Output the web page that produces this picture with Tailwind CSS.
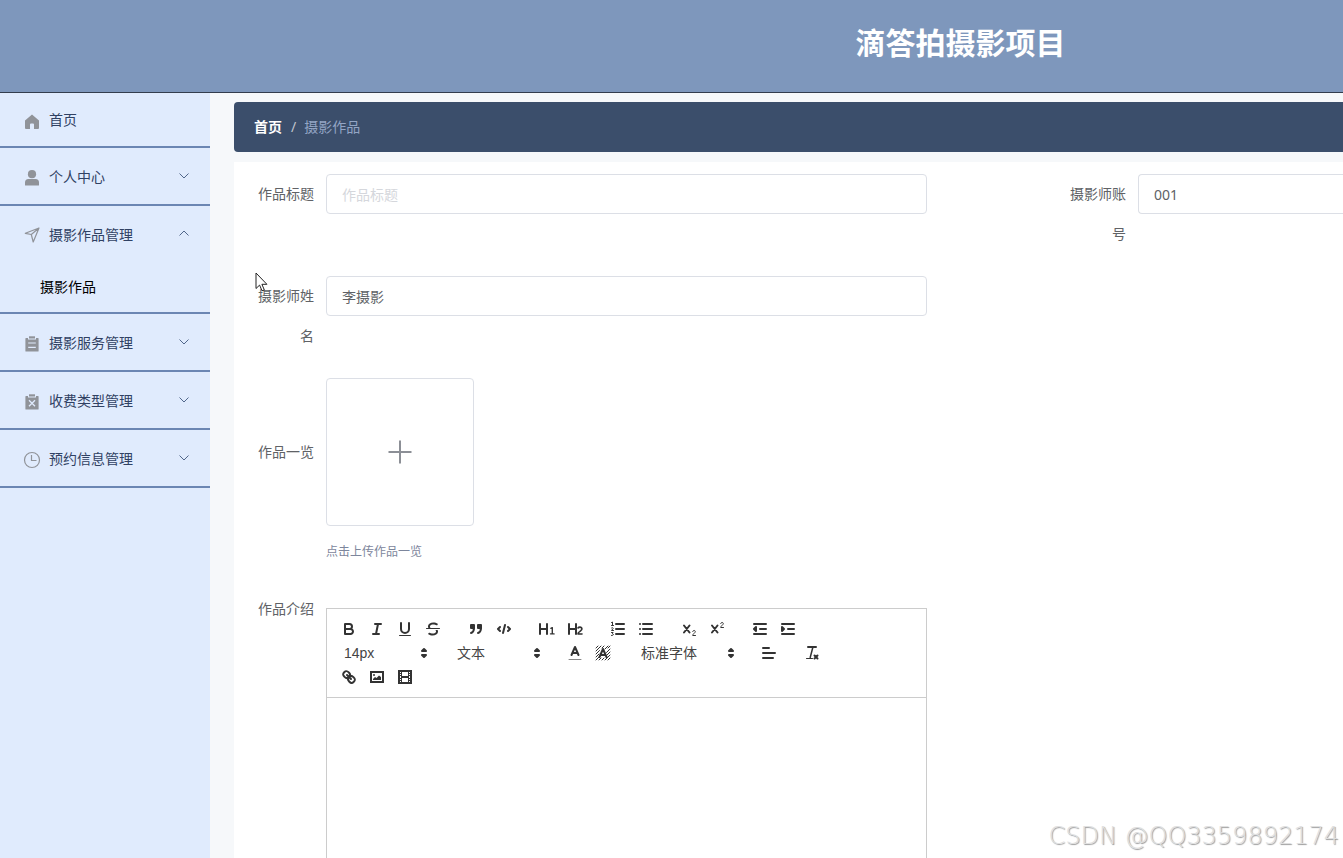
<!DOCTYPE html>
<html lang="zh-CN">
<head>
<meta charset="utf-8">
<meta name="viewport" content="width=device-width, initial-scale=1">
<title>滴答拍摄影项目</title>
<script src="https://cdn.jsdelivr.net/npm/@tailwindcss/browser@4"></script>
</head>
<body class="relative flex h-screen flex-col overflow-hidden bg-[#f6f8fa] font-['Noto_Sans','Noto_Sans_CJK_SC',sans-serif] text-sm text-[#606266]">

<header class="h-[93px] shrink-0 border-b border-[#333d4d] bg-[#7e97bc] pl-[578px]">
  <h1 class="pt-[13px] text-center text-[30px] leading-[60px] font-bold whitespace-nowrap text-white">滴答拍摄影项目</h1>
</header>

<div class="flex min-h-0 flex-1">
  <nav aria-label="主菜单" class="w-[210px] shrink-0 bg-[#e0ebfd] text-[#304163]">
    <a href="#" class="flex h-[55px] items-center gap-2 border-b-2 border-[#6b86b3] pl-[23px]">
      <svg class="mt-1 size-[18px] fill-[#909399]" viewBox="0 0 18 18"><path d="M9 1.500 2 7.400V15a1 1 0 0 0 1 1h4v-4.500a1 1 0 0 1 1-1h2a1 1 0 0 1 1 1V16h4a1 1 0 0 0 1-1V7.400z"/></svg>
      <span>首页</span>
    </a>
    <button class="flex h-[58px] w-full items-center gap-2 border-b-2 border-[#6b86b3] pt-0.5 pr-5 pl-[23px] text-left">
      <svg class="mt-0.5 size-[18px] fill-[#909399]" viewBox="0 0 18 18"><circle cx="9" cy="5.200" r="4.100"/><path d="M2 16v-2.500a3.500 3.500 0 0 1 3.500-3.500h7a3.500 3.500 0 0 1 3.500 3.500V16a.6.6 0 0 1-.6.6H2.600A.6.6 0 0 1 2 16z"/></svg>
      <span class="flex-1">个人中心</span>
      <svg class="mb-0.5 size-3 fill-none stroke-[#51678b]" viewBox="0 0 12 12"><path d="m1.500 3.500 4.500 4.500 4.500-4.500"/></svg>
    </button>
    <div class="border-b-2 border-[#6b86b3]">
      <button class="flex h-14 w-full items-center gap-2 pt-0.5 pr-5 pl-[23px] text-left">
        <svg class="size-[18px] fill-none stroke-[#909399] stroke-[1.200]" viewBox="0 0 18 18"><path d="M16 2 2.300 7.300l6 1.200 1.900 7.500zM16 2 8.300 8.500" stroke-linejoin="round"/></svg>
        <span class="flex-1">摄影作品管理</span>
        <svg class="mb-0.5 size-3 fill-none stroke-[#51678b]" viewBox="0 0 12 12"><path d="m1.500 7.500 4.500-4.500 4.500 4.500"/></svg>
      </button>
      <a href="#" class="block h-[50px] pl-10 leading-[50px] text-black">摄影作品</a>
    </div>
    <button class="flex h-[58px] w-full items-center gap-2 border-b-2 border-[#6b86b3] pt-0.5 pr-5 pl-[23px] text-left">
      <svg class="mt-0.5 size-[18px] fill-[#909399]" viewBox="0 0 18 18"><path fill-rule="evenodd" d="M3 3h2v1.500h8V3h2a.6.6 0 0 1 .6.6v12.300a.6.6 0 0 1-.6.6H3a.6.6 0 0 1-.6-.6V3.600A.6.6 0 0 1 3 3zM5.200 7.500v1.100h7.600V7.500zm0 4.300v1.100h7.600v-1.100z"/><path d="M6 1.300h6v2.200H6z"/></svg>
      <span class="flex-1">摄影服务管理</span>
      <svg class="mb-0.5 size-3 fill-none stroke-[#51678b]" viewBox="0 0 12 12"><path d="m1.500 3.500 4.500 4.500 4.500-4.500"/></svg>
    </button>
    <button class="flex h-[58px] w-full items-center gap-2 border-b-2 border-[#6b86b3] pt-0.5 pr-5 pl-[23px] text-left">
      <svg class="mt-0.5 size-[18px] fill-[#909399]" viewBox="0 0 18 18"><path d="M3 3h2v1.500h8V3h2a.6.6 0 0 1 .6.6v12.300a.6.6 0 0 1-.6.6H3a.6.6 0 0 1-.6-.6V3.600A.6.6 0 0 1 3 3z"/><path d="M6 1.300h6v2.200H6z"/><path class="stroke-[#e0ebfd]" stroke-width="1.300" d="m6 7.200 6 6m0-6-6 6"/></svg>
      <span class="flex-1">收费类型管理</span>
      <svg class="mb-0.5 size-3 fill-none stroke-[#51678b]" viewBox="0 0 12 12"><path d="m1.500 3.500 4.500 4.500 4.500-4.500"/></svg>
    </button>
    <button class="flex h-[58px] w-full items-center gap-2 border-b-2 border-[#6b86b3] pt-0.5 pr-5 pl-[23px] text-left">
      <svg class="mt-0.5 size-[18px] fill-none stroke-[#909399] stroke-[1.200]" viewBox="0 0 18 18"><circle cx="9" cy="9" r="7.500"/><path d="M8.500 4v5.500h5"/></svg>
      <span class="flex-1">预约信息管理</span>
      <svg class="mb-0.5 size-3 fill-none stroke-[#51678b]" viewBox="0 0 12 12"><path d="m1.500 3.500 4.500 4.500 4.500-4.500"/></svg>
    </button>
  </nav>

  <main class="flex min-w-0 flex-1 flex-col pt-[9px] pl-6">
    <nav aria-label="面包屑" class="flex h-[50px] shrink-0 items-center gap-2 rounded-l bg-[#3b4e6b] pl-5">
      <a href="#" class="font-bold text-white">首页</a>
      <span class="pl-px text-[#c0c4cc]">/</span>
      <span class="text-[#93a5c5]">摄影作品</span>
    </nav>

    <form class="mt-2.5 min-h-0 flex-1 overflow-hidden bg-white pt-3 pl-3">
      <div class="grid grid-cols-[681px_1fr] gap-x-[131px]">
        <div class="flex h-[102px]">
          <label for="title" class="w-20 shrink-0 pr-3 text-right leading-10">作品标题</label>
          <input id="title" placeholder="作品标题" class="h-10 min-w-0 flex-1 rounded border border-[#dcdfe6] px-[15px] placeholder:text-[#d5d7dc]">
        </div>
        <div class="flex h-[102px]">
          <label for="account" class="w-20 shrink-0 pr-3 text-right leading-10">摄影师账号</label>
          <input id="account" value="001" class="h-10 min-w-0 flex-1 rounded-l border border-r-0 border-[#dcdfe6] px-[15px]">
        </div>
        <div class="flex h-[102px]">
          <label for="name" class="w-20 shrink-0 pr-3 text-right leading-10">摄影师姓名</label>
          <input id="name" value="李摄影" class="h-10 min-w-0 flex-1 rounded border border-[#dcdfe6] px-[15px]">
        </div>
      </div>

      <div class="flex">
        <span class="w-20 shrink-0 pr-3 text-right leading-[148px]">作品一览</span>
        <div>
          <button type="button" aria-label="上传作品一览" class="flex size-[148px] items-center justify-center rounded border border-[#dcdfe6]">
            <svg class="size-6 fill-none stroke-[#8c8f96] stroke-2" viewBox="0 0 24 24"><path d="M12 .5v23M.5 12h23"/></svg>
          </button>
          <p class="mt-4 text-xs leading-5 text-[#7d869c]">点击上传作品一览</p>
        </div>
      </div>

      <div class="mt-[27px] flex">
        <span class="w-20 shrink-0 pr-3 text-right leading-10">作品介绍</span>
        <div class="mt-[19px] w-[601px] border border-[#ccc] text-[#444]">
          <div role="toolbar" aria-label="编辑工具" class="flex flex-wrap gap-x-[15px] border-b border-[#ccc] p-2 font-['Liberation_Sans','Noto_Sans_CJK_SC',sans-serif] [&_button]:h-6 [&_button]:w-7 [&_button]:px-[5px] [&_button]:py-[3px] [&_svg]:size-[18px] [&_svg]:fill-none [&_svg]:stroke-[#333] [&_svg]:stroke-2 [&_svg]:[stroke-linecap:round] [&_svg]:[stroke-linejoin:round]">
            <div class="flex">
              <button type="button" aria-label="粗体"><svg viewBox="0 0 18 18"><path d="M5 4h4.500A2.500 2.500 0 0 1 12 6.500 2.500 2.500 0 0 1 9.500 9H5V4zM5 9h5.500a2.500 2.500 0 0 1 2.500 2.500 2.500 2.500 0 0 1-2.500 2.500H5V9z"/></svg></button>
              <button type="button" aria-label="斜体"><svg viewBox="0 0 18 18"><path d="M7 4h6M5 14h6M8 14l2-10"/></svg></button>
              <button type="button" aria-label="下划线"><svg viewBox="0 0 18 18"><path d="M5 3v6a4.012 4.012 0 0 0 4 4 4.012 4.012 0 0 0 4-4V3"/><rect x="3" y="15" width="12" height="1" rx=".5" fill="#333" stroke="none"/></svg></button>
              <button type="button" aria-label="删除线"><svg viewBox="0 0 18 18"><path class="stroke-1" d="M2.500 8.500h13"/><path fill="#333" stroke="none" d="M6.500 8c-.500-.700-.600-1.300-.500-1.800.200-1.200 1.500-1.800 3.200-1.800 1.300 0 2.600.4 3.200.8a1 1 0 0 0 1-1.700C12.600 3 11 2.500 9.300 2.500 6.600 2.500 4.300 3.700 4 6c-.1.700 0 1.400.4 2zM11.500 10c.500.700.600 1.300.5 1.800-.2 1.200-1.500 1.800-3.200 1.800-1.300 0-2.600-.4-3.200-.8a1 1 0 0 0-1 1.700c.8.5 2.400 1 4.100 1 2.700 0 5-1.200 5.300-3.500.1-.7 0-1.400-.4-2z"/></svg></button>
            </div>
            <div class="flex">
              <button type="button" aria-label="引用"><svg viewBox="0 0 18 18"><g fill="#333"><path d="M4 5h3v3H4zM11 5h3v3h-3z"/><path fill="none" d="M7 8c0 4.031-3 5-3 5M14 8c0 4.031-3 5-3 5"/></g></svg></button>
              <button type="button" aria-label="代码"><svg viewBox="0 0 18 18"><path d="M5 7 3 9l2 2M13 7l2 2-2 2M10 5l-2 8"/></svg></button>
            </div>
            <div class="flex">
              <button type="button" aria-label="一级标题"><svg viewBox="0 0 18 18"><path fill="#333" stroke="none" d="M10 4v10a1 1 0 0 1-2 0v-4H3v4a1 1 0 0 1-2 0V4a1 1 0 0 1 2 0v4h5V4a1 1 0 0 1 2 0zm6.068 9.210H14.980V7.596a.543.543 0 0 0-.605-.605.910.910 0 0 0-.429.100l-1.430.700a.650.650 0 0 0-.200.900c.200.400.600.400.900.200l.400-.200v4.520h-1.046a.7.700 0 0 0-.1 1.400c.030.010.060.010.100.010h3.500a.7.700 0 0 0 0-1.410z"/></svg></button>
              <button type="button" aria-label="二级标题"><svg viewBox="0 0 18 18"><path fill="#333" stroke="none" d="M16.740 13.814v.281A.634.634 0 0 1 16.190 14.634H11.867a.6.600 0 0 1-.6-.6v-.3c0-2.200 3.700-3.100 3.700-4.700a1 1 0 0 0-1.100-1.100 1.400 1.400 0 0 0-1.100.500c-.250.300-.500.430-.9.230l-.4-.24c-.300-.170-.350-.5-.17-.800a3 3 0 0 1 2.700-1.270c1.500 0 2.700 1 2.700 2.500 0 2.200-3.100 3.400-3.500 4.350h2.970c.4 0 .573.21.573.61zM10 3a1 1 0 0 0-1 1v4H4V4a1 1 0 0 0-2 0v10a1 1 0 0 0 2 0v-4h5v4a1 1 0 0 0 2 0V4a1 1 0 0 0-1-1z"/></svg></button>
            </div>
            <div class="flex">
              <button type="button" aria-label="有序列表"><svg viewBox="0 0 18 18"><path d="M7 4h8M7 9h8M7 14h8"/><path class="stroke-1" d="M2.500 2.500 3.500 2v3.500M2.500 5.500h2M2.500 8c.700-.800 2-.300 1.600.600L2.500 10.500h2M2.500 12.500h1.600l-.700 1.200c1.600.300 1.300 2-.900 1.800"/></svg></button>
              <button type="button" aria-label="无序列表"><svg viewBox="0 0 18 18"><path d="M6 4h9M6 9h9M6 14h9M3 4h.010M3 9h.010M3 14h.010"/></svg></button>
            </div>
            <div class="flex">
              <button type="button" aria-label="下标"><svg viewBox="0 0 18 18"><path d="m4 5.500 5.500 7M9.500 5.500l-5.500 7"/><path class="stroke-1" d="M12.700 11.500c.300-1.500 2.600-1.400 2.600.1 0 1.200-2.600 2.300-2.600 3.900h2.800"/></svg></button>
              <button type="button" aria-label="上标"><svg viewBox="0 0 18 18"><path d="m4 5.500 5.500 7M9.500 5.500l-5.500 7"/><path class="stroke-1" d="M12.700 3.500c.300-1.500 2.600-1.400 2.600.1 0 1.200-2.600 2.300-2.600 3.900h2.800"/></svg></button>
            </div>
            <div class="flex">
              <button type="button" aria-label="减少缩进"><svg viewBox="0 0 18 18"><path d="M3 14h12M3 4h12M9 9h6M5 7v4L3 9z"/></svg></button>
              <button type="button" aria-label="增加缩进"><svg viewBox="0 0 18 18"><path d="M3 14h12M3 4h12M9 9h6M3 7v4l2-2z"/></svg></button>
            </div>
            <div class="basis-full"></div>
            <button type="button" class="flex! w-[98px]! items-center justify-between pr-0! pl-[9px]!">14px<svg viewBox="0 0 18 18"><path fill="#333" d="m7 11 2 2 2-2zM7 7l2-2 2 2z"/></svg></button>
            <button type="button" class="flex! w-[98px]! items-center justify-between pr-0! pl-[9px]!">文本<svg viewBox="0 0 18 18"><path fill="#333" d="m7 11 2 2 2-2zM7 7l2-2 2 2z"/></svg></button>
            <div class="flex">
              <button type="button" aria-label="文字颜色"><svg viewBox="0 0 18 18"><path class="stroke-[#888] stroke-1" d="M3 15.500h12"/><path d="M5.500 11 9 3l3.500 8M11.630 9H6.380"/></svg></button>
              <button type="button" aria-label="背景颜色"><svg viewBox="0 0 18 18"><path class="stroke-1" d="M2 4l2-2M2 7l5-5M2 10l3.500-3.500M2 13l3-3M2 16l4-4M8 4l2-2M5 16l2-2M8 16l2-2M11 16l5-5M14 16l2-2M12.500 8.500 16 5M11 5l3-3M13 11l3-3M14 4l2-2"/><path d="m5.500 13 3.500-8 3.500 8M11.630 11H6.380"/></svg></button>
            </div>
            <button type="button" class="flex! w-[108px]! items-center justify-between pr-0! pl-[9px]!">标准字体<svg viewBox="0 0 18 18"><path fill="#333" d="m7 11 2 2 2-2zM7 7l2-2 2 2z"/></svg></button>
            <button type="button" aria-label="对齐"><svg viewBox="0 0 18 18"><path d="M3 9h12M3 14h10M3 4h6"/></svg></button>
            <button type="button" aria-label="清除格式"><svg viewBox="0 0 18 18"><path d="M5 3h8M11.500 11.500l3 3M14.500 11.500l-3 3"/><path class="stroke-[1.500]" d="M9.800 3.500 7.200 13.500"/><path class="stroke-1" d="M3.500 14.500h6"/></svg></button>
            <div class="basis-full"></div>
            <div class="flex">
              <button type="button" aria-label="链接"><svg viewBox="0 0 18 18"><path d="m7 7 4 4M8.900 4.577a3.476 3.476 0 0 1 .360 4.679A3.476 3.476 0 0 1 4.577 8.900C3.185 7.500 2.035 6.400 4.217 4.217S7.500 3.185 8.900 4.577zM13.423 9.100a3.476 3.476 0 0 0-4.679-.360 3.476 3.476 0 0 0 .360 4.679c1.392 1.392 2.500 2.542 4.679.360s1.032-3.287-.360-4.679z"/></svg></button>
              <button type="button" aria-label="图片"><svg viewBox="0 0 18 18"><path class="[stroke-linejoin:miter]" d="M3 4h12v10H3z"/><circle cx="6" cy="7" r="1" fill="#333" stroke="none"/><path fill="#333" stroke="none" d="M5 12v-1l2-2 1.500 1L11 7.500l2 1.500v3z"/></svg></button>
              <button type="button" aria-label="视频"><svg viewBox="0 0 18 18"><path class="[stroke-linejoin:miter]" d="M3 3h12v12H3z"/><path fill="#333" stroke="none" d="M5 3h1v12H5zM12 3h1v12h-1zM5 8h8v2H5zM3 5h3v1H3zM3 7h3v1H3zM3 10h3v1H3zM3 12h3v1H3zM12 5h3v1h-3zM12 7h3v1h-3zM12 10h3v1h-3zM12 12h3v1h-3z"/></svg></button>
            </div>
          </div>
          <div role="textbox" aria-label="作品介绍" contenteditable="true" class="min-h-96"></div>
        </div>
      </div>
    </form>
  </main>
</div>

<svg class="absolute top-[272px] left-[255px] h-5 w-3.5" viewBox="0 0 14 20" aria-hidden="true"><path d="M1 1v15.500l3.600-3.400 2.400 5.700 2.300-1-2.400-5.500h5z" fill="#fff" stroke="#222"/></svg>
<div class="absolute right-1 bottom-1 font-['DejaVu_Sans',sans-serif] text-2xl leading-9 font-extralight text-[#e0e0e0] [text-shadow:1px_1px_1px_#999]">CSDN @QQ3359892174</div>
</body>
</html>
